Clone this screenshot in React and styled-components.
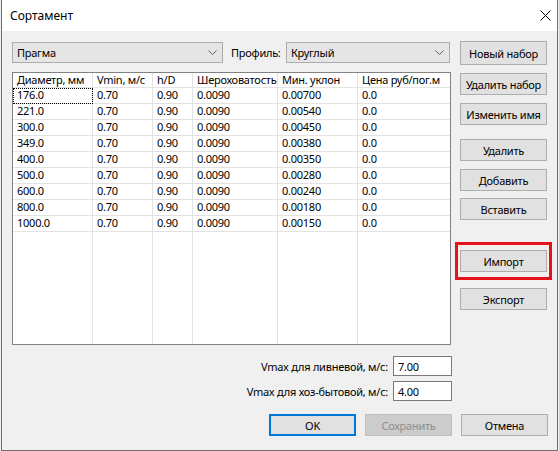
import React from "react";
import styled, { createGlobalStyle } from "styled-components";

const GlobalStyle = createGlobalStyle`
  html, body {
    margin: 0;
    padding: 0;
    background: #f0f0f0;
  }
  body {
    font-family: "Noto Sans", "Open Sans", sans-serif;
    font-size: 11px;
    letter-spacing: -0.25px;
    color: #000;
  }
  * {
    box-sizing: border-box;
  }
`;

const Window = styled.div`
  margin-left: 1px;
  width: 557px;
  height: 451px;
  border: 1px solid #6f6f6f;
  border-top: none;
  display: flex;
  flex-direction: column;
  background: #f0f0f0;
`;

const TitleBar = styled.div`
  height: 31px;
  background: #fff;
  display: flex;
  align-items: center;
  justify-content: space-between;
  padding: 0 6px 1px 8px;
  font-size: 12px;
  letter-spacing: 0;
  flex-shrink: 0;
`;

const Body = styled.div`
  flex: 1;
  display: flex;
  flex-direction: column;
  padding: 10px 9px 0 10px;
`;

const Main = styled.div`
  display: flex;
  gap: 8px;
`;

const LeftCol = styled.div`
  width: 440px;
  display: flex;
  flex-direction: column;
`;

const TopRow = styled.div`
  display: flex;
  align-items: center;
  margin-top: 1px;
  height: 21px;
`;

const Combo = styled.div`
  width: ${(p) => p.$width}px;
  height: 21px;
  background: #e5e5e5;
  border: 1px solid #adadad;
  display: flex;
  align-items: center;
  justify-content: space-between;
  padding: 0 5px 0 4px;
`;

const FieldLabel = styled.span`
  width: 63px;
  padding-left: 8px;
`;

const TableBox = styled.div`
  margin-top: 9px;
  width: 439px;
  height: 273px;
  border: 1px solid #828282;
  background: #fff;
  display: grid;
  grid-template-columns: 80px 60px 40px 85px 80px 1fr;
  grid-template-rows: 15px repeat(9, 16px) 1fr;
`;

const Cell = styled.div`
  border-right: ${(p) => (p.$last ? "none" : "1px solid #e3e3e3")};
  border-bottom: ${(p) => (p.$filler ? "none" : "1px solid #e3e3e3")};
  padding-left: 4px;
  line-height: 14px;
  white-space: nowrap;
  overflow: hidden;
  outline: ${(p) => (p.$focused ? "1px dotted #000" : "none")};
  outline-offset: -1px;
`;

const VmaxRow = styled.div`
  display: flex;
  justify-content: flex-end;
  align-items: center;
  gap: 5px;
  margin-top: ${(p) => p.$top}px;
`;

const Input = styled.div`
  width: 59px;
  height: 20px;
  background: #fff;
  border: 1px solid #7a7a7a;
  padding-left: 4px;
  display: flex;
  align-items: center;
`;

const RightCol = styled.div`
  width: 87px;
  display: flex;
  flex-direction: column;
`;

const Button = styled.div`
  width: 87px;
  height: ${(p) => p.$h || 22}px;
  margin-top: ${(p) => p.$top || 0}px;
  background: ${(p) => (p.$disabled ? "#cccccc" : "#e1e1e1")};
  border: ${(p) =>
    p.$primary ? "2px solid #0078d7" : p.$disabled ? "1px solid #bfbfbf" : "1px solid #adadad"};
  color: ${(p) => (p.$disabled ? "#8d8d8d" : "#000")};
  display: flex;
  align-items: center;
  justify-content: center;
  white-space: nowrap;
  flex-shrink: 0;
`;

const Highlight = styled.div`
  margin: ${(p) => p.$top}px -5px -8px;
  padding: 5px 2px;
  border: 3px solid #e8101a;
`;

const BottomRow = styled.div`
  display: flex;
  justify-content: flex-end;
  gap: 9px;
  margin-top: 13px;
`;

const Chevron = () => (
  <svg width="9" height="5" viewBox="0 0 9 5">
    <path d="M0.5 0.5 L4.5 4.5 L8.5 0.5" fill="none" stroke="#606060" strokeWidth="1" />
  </svg>
);

const CloseIcon = () => (
  <svg width="11" height="11" viewBox="0 0 11 11">
    <path d="M0.5 0.5 L10.5 10.5 M10.5 0.5 L0.5 10.5" stroke="#000" strokeWidth="1" />
  </svg>
);

const headers = ["Диаметр, мм", "Vmin, м/с", "h/D", "Шероховатость", "Мин. уклон", "Цена руб/пог.м"];

const rows = [
  ["176.0", "0.00700"],
  ["221.0", "0.00540"],
  ["300.0", "0.00450"],
  ["349.0", "0.00380"],
  ["400.0", "0.00350"],
  ["500.0", "0.00280"],
  ["600.0", "0.00240"],
  ["800.0", "0.00180"],
  ["1000.0", "0.00150"],
];

const App = () => {
  return (
    <>
      <GlobalStyle />
      <Window>
        <TitleBar>
          <span>Сортамент</span>
          <CloseIcon />
        </TitleBar>
        <Body>
          <Main>
            <LeftCol>
              <TopRow>
                <Combo $width={211}>
                  <span>Прагма</span>
                  <Chevron />
                </Combo>
                <FieldLabel>Профиль:</FieldLabel>
                <Combo $width={164}>
                  <span>Круглый</span>
                  <Chevron />
                </Combo>
              </TopRow>
              <TableBox>
                {headers.map((h, i) => (
                  <Cell key={h} $last={i === 5}>
                    {h}
                  </Cell>
                ))}
                {rows.map(([d, slope], r) =>
                  [d, "0.70", "0.90", "0.0090", slope, "0.0"].map((v, i) => (
                    <Cell key={r + "-" + i} $last={i === 5} $focused={r === 0 && i === 0}>
                      {v}
                    </Cell>
                  ))
                )}
                {headers.map((h, i) => (
                  <Cell key={"f" + i} $last={i === 5} $filler />
                ))}
              </TableBox>
              <VmaxRow $top={11}>
                <span>Vmax для ливневой, м/с:</span>
                <Input>7.00</Input>
              </VmaxRow>
              <VmaxRow $top={5}>
                <span>Vmax для хоз-бытовой, м/с:</span>
                <Input>4.00</Input>
              </VmaxRow>
            </LeftCol>
            <RightCol>
              <Button $h={24}>Новый набор</Button>
              <Button $top={8}>Удалить набор</Button>
              <Button $top={8}>Изменить имя</Button>
              <Button $top={14}>Удалить</Button>
              <Button $top={8}>Добавить</Button>
              <Button $top={7}>Вставить</Button>
              <Highlight $top={22}>
                <Button>Импорт</Button>
              </Highlight>
              <Button $top={16}>Экспорт</Button>
            </RightCol>
          </Main>
          <BottomRow>
            <Button $primary>OK</Button>
            <Button $disabled>Сохранить</Button>
            <Button>Отмена</Button>
          </BottomRow>
        </Body>
      </Window>
    </>
  );
};

export default App;
